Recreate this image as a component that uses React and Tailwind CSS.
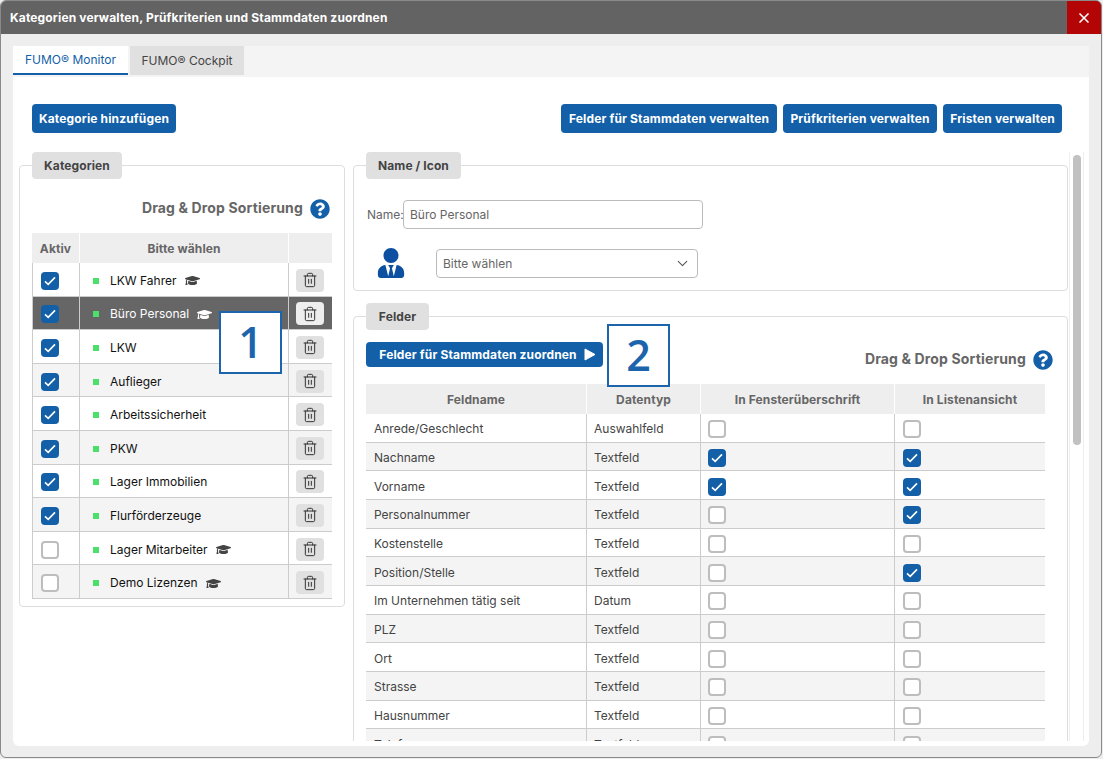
import React from 'react'
import { Trash2, ChevronDown, X } from 'lucide-react'
import { FaGraduationCap, FaQuestionCircle, FaUserTie } from 'react-icons/fa'

const categories = [
  { name: 'LKW Fahrer', active: true, cap: true },
  { name: 'Büro Personal', active: true, cap: true, selected: true },
  { name: 'LKW', active: true },
  { name: 'Auflieger', active: true },
  { name: 'Arbeitssicherheit', active: true },
  { name: 'PKW', active: true },
  { name: 'Lager Immobilien', active: true },
  { name: 'Flurförderzeuge', active: true },
  { name: 'Lager Mitarbeiter', active: false, cap: true },
  { name: 'Demo Lizenzen', active: false, cap: true },
]

const fields = [
  ['Anrede/Geschlecht', 'Auswahlfeld', false, false],
  ['Nachname', 'Textfeld', true, true],
  ['Vorname', 'Textfeld', true, true],
  ['Personalnummer', 'Textfeld', false, true],
  ['Kostenstelle', 'Textfeld', false, false],
  ['Position/Stelle', 'Textfeld', false, true],
  ['Im Unternehmen tätig seit', 'Datum', false, false],
  ['PLZ', 'Textfeld', false, false],
  ['Ort', 'Textfeld', false, false],
  ['Strasse', 'Textfeld', false, false],
  ['Hausnummer', 'Textfeld', false, false],
  ['Telefon', 'Textfeld', false, false],
]

function Checkbox({ checked }) {
  if (checked) {
    return (
      <span className="flex h-[18px] w-[18px] items-center justify-center rounded-[4px] bg-[#1360a9]">
        <svg width="12" height="10" viewBox="0 0 12 10" fill="none">
          <path d="M1 5.4 L4.2 8.4 L11 1.4" stroke="white" strokeWidth="1.6" />
        </svg>
      </span>
    )
  }
  return <span className="block h-[18px] w-[18px] rounded-[4px] border-2 border-[#bdbdbd] bg-white" />
}

function Btn({ children, className = '' }) {
  return (
    <button className={'flex items-center justify-center rounded-[4px] bg-[#1360a9] text-[12px] font-bold tracking-[0.15px] text-white ' + className}>
      {children}
    </button>
  )
}

function Legend({ children, className = '' }) {
  return (
    <div className={'flex h-[27px] items-center justify-center rounded-[4px] bg-[#e0e0e0] text-[12px] font-bold tracking-[0.1px] text-[#444] ' + className}>
      {children}
    </div>
  )
}

function DragHint() {
  return (
    <div className="flex items-center justify-end gap-[7px]">
      <span className="-mt-[3px] text-[14px] font-bold tracking-[0.15px] text-[#666]">Drag &amp; Drop Sortierung</span>
      <FaQuestionCircle className="text-[20px] text-[#1360a9]" />
    </div>
  )
}

function CategoryRow({ cat, index }) {
  const bg = cat.selected ? 'bg-[#666]' : index % 2 === 1 ? 'bg-[#f4f4f4]' : 'bg-white'
  return (
    <div className={'flex h-[33.6px] border-b border-[#ccc] ' + bg}>
      <div className="flex w-[48px] items-center border-x border-[#ccc] pl-[8px] pt-[3px]">
        <Checkbox checked={cat.active} />
      </div>
      <div className={'flex w-[209px] items-center border-r border-[#ccc] pl-[13px] pt-[3px] text-[12px] ' + (cat.selected ? 'text-white' : 'text-[#111]')}>
        <span className="mr-[11px] h-[6px] w-[6px] bg-[#4bdf6c]" />
        {cat.name}
        {cat.cap && <FaGraduationCap className={'ml-[8px] text-[15px] ' + (cat.selected ? 'text-white' : 'text-[#444]')} />}
      </div>
      <div className="flex flex-1 items-center justify-center pr-[1px] pt-[2px]">
        <span className={'flex h-[23px] w-[28px] items-center justify-center rounded-[4px] ' + (cat.selected ? 'bg-[#eee]' : 'bg-[#e0e0e0]')}>
          <Trash2 size={16} strokeWidth={1.5} className="text-[#333]" />
        </span>
      </div>
    </div>
  )
}

function FieldRow({ row, index }) {
  return (
    <div className={'flex h-[28.67px] border-b border-[#ccc] text-[12px] text-[#444] ' + (index % 2 === 1 ? 'bg-[#f4f4f4]' : 'bg-white')}>
      <div className="flex w-[221px] items-center border-r border-[#ccc] pl-[8px] pt-[3px]">{row[0]}</div>
      <div className="flex w-[114px] items-center border-r border-[#ccc] pl-[7px] pt-[3px]">{row[1]}</div>
      <div className="flex w-[194px] items-center border-r border-[#ccc] pl-[7px] pt-[3px]"><Checkbox checked={row[2]} /></div>
      <div className="flex flex-1 items-center pl-[8px] pt-[3px]"><Checkbox checked={row[3]} /></div>
    </div>
  )
}

function NumberBox({ children, className = '' }) {
  return (
    <div className={'absolute z-10 flex h-[63px] w-[63px] items-center justify-center border-2 border-[#1c64ac] bg-white font-["Open_Sans",sans-serif] text-[43px] font-[550] text-[#1c64ac] ' + className}>
      {children}
    </div>
  )
}

export default function App() {
  return (
    <div className="h-[759px] w-[1103px] overflow-hidden bg-[#eee] font-['Inter',sans-serif]">
      <div className="relative h-[758px] w-[1102px] overflow-hidden rounded-[6px] border border-[#8a8a8a] bg-[#eee]">
        <div className="flex h-[33px] items-center justify-between bg-[#636363] pl-[9px]">
          <span className="text-[12px] font-bold tracking-[0.15px] text-white">Kategorien verwalten, Prüfkriterien und Stammdaten zuordnen</span>
          <span className="flex h-[33px] w-[34px] items-center justify-center bg-[#b30505]">
            <X size={16} strokeWidth={2.5} className="text-white" />
          </span>
        </div>

        <div className="mx-[12px] mt-[12px] h-[700px] w-[1076px] overflow-hidden rounded-b-[6px] bg-white">
          <div className="flex h-[31px] gap-[2px] bg-[#f4f4f4]">
            <div className="flex h-[29px] w-[115px] items-center justify-center border-b-2 border-[#1360a9] bg-white text-[12px] text-[#1360a9]">FUMO® Monitor</div>
            <div className="flex h-[29px] w-[114px] items-center justify-center bg-[#e0e0e0] text-[12px] text-[#444]">FUMO® Cockpit</div>
          </div>

          <div className="mt-[27px] flex pl-[19px] pr-[27px]">
            <Btn className="h-[29px] w-[144px]">Kategorie hinzufügen</Btn>
            <div className="ml-auto flex gap-[6px]">
              <Btn className="h-[29px] w-[216px]">Felder für Stammdaten verwalten</Btn>
              <Btn className="h-[29px] w-[154px]">Prüfkriterien verwalten</Btn>
              <Btn className="h-[29px] w-[119px]">Fristen verwalten</Btn>
            </div>
          </div>

          <div className="relative mt-[19px] flex pl-[6px]">
            {/* linke Spalte */}
            <div className="w-[326px] shrink-0">
              <Legend className="relative z-[1] ml-[13px] w-[90px]">Kategorien</Legend>
              <div className="-mt-[14px] h-[442px] rounded-[4px] border border-[#ddd] px-[12px] pt-[33px]">
                <div className="pr-[2px]"><DragHint /></div>
                <div className="mt-[14px]">
                  <div className="flex h-[30px] gap-[1px] text-[12px] font-bold tracking-[0.1px] text-[#666]">
                    <div className="flex w-[47px] items-center justify-center bg-[#eee] pt-[1px]">Aktiv</div>
                    <div className="flex w-[208px] items-center justify-center bg-[#eee] pt-[1px]">Bitte wählen</div>
                    <div className="flex-1 bg-[#eee]" />
                  </div>
                  {categories.map((cat, i) => <CategoryRow key={cat.name} cat={cat} index={i} />)}
                </div>
              </div>
              <NumberBox className="left-[206px] top-[159px]">1</NumberBox>
            </div>

            {/* rechte Spalte, scrollt */}
            <div className="relative ml-[8px] h-[589px] flex-1 overflow-hidden">
              <Legend className="relative z-[1] ml-[13px] w-[95px]">Name / Icon</Legend>
              <div className="-mt-[14px] h-[126px] w-[715px] rounded-[4px] border border-[#ddd] pl-[13px] pt-[34px]">
                <div className="flex items-center text-[12px] text-[#666]">
                  <span className="w-[36px]">Name:</span>
                  <div className="flex h-[29px] w-[300px] items-center rounded-[4px] border border-[#bbb] pl-[6px]">Büro Personal</div>
                </div>
                <div className="mt-[19px] flex items-center pl-[9px]">
                  <FaUserTie className="text-[30px] text-[#0d4fa0]" />
                  <div className="ml-[30px] flex h-[29px] w-[262px] items-center justify-between rounded-[4px] border border-[#bbb] pl-[6px] pr-[6px] pt-[1px] text-[12px] text-[#666]">
                    Bitte wählen
                    <ChevronDown size={17} strokeWidth={1.5} className="text-[#555]" />
                  </div>
                </div>
              </div>

              <Legend className="relative z-[1] ml-[13px] mt-[12px] w-[63px]">Felder</Legend>
              <div className="-mt-[14px] w-[715px] rounded-[4px] border border-[#ddd] pl-[12px] pr-[22px] pt-[25px]">
                <div className="flex items-start justify-between">
                  <Btn className="h-[25px] w-[237px] gap-[7px] pl-[6px]">
                    Felder für Stammdaten zuordnen
                    <svg width="12" height="13" viewBox="0 0 12 13"><path d="M1 1 L11 6.5 L1 12 Z" fill="white" stroke="white" strokeLinejoin="round" /></svg>
                  </Btn>
                  <div className="-mr-[8px] mt-[8px]"><DragHint /></div>
                </div>
                <div className="mt-[14px]">
                  <div className="flex h-[30px] gap-[1px] text-[12px] font-bold tracking-[0.1px] text-[#666]">
                    <div className="flex w-[220px] items-center justify-center bg-[#eee] pt-[1px]">Feldname</div>
                    <div className="flex w-[113px] items-center justify-center bg-[#eee] pt-[1px]">Datentyp</div>
                    <div className="flex w-[193px] items-center justify-center bg-[#eee] pt-[1px]">In Fensterüberschrift</div>
                    <div className="flex flex-1 items-center justify-center bg-[#eee] pt-[1px]">In Listenansicht</div>
                  </div>
                  {fields.map((row, i) => <FieldRow key={row[0]} row={row} index={i} />)}
                </div>
                <NumberBox className="left-[254px] top-[172px]">2</NumberBox>
              </div>

              <div className="absolute right-[5px] top-0 flex h-full w-[15px] justify-center border-x border-[#eee] bg-white pt-[3px]">
                <div className="h-[290px] w-[8px] rounded-full bg-[#c1c1c1]" />
              </div>
            </div>
          </div>
        </div>
      </div>
    </div>
  )
}
